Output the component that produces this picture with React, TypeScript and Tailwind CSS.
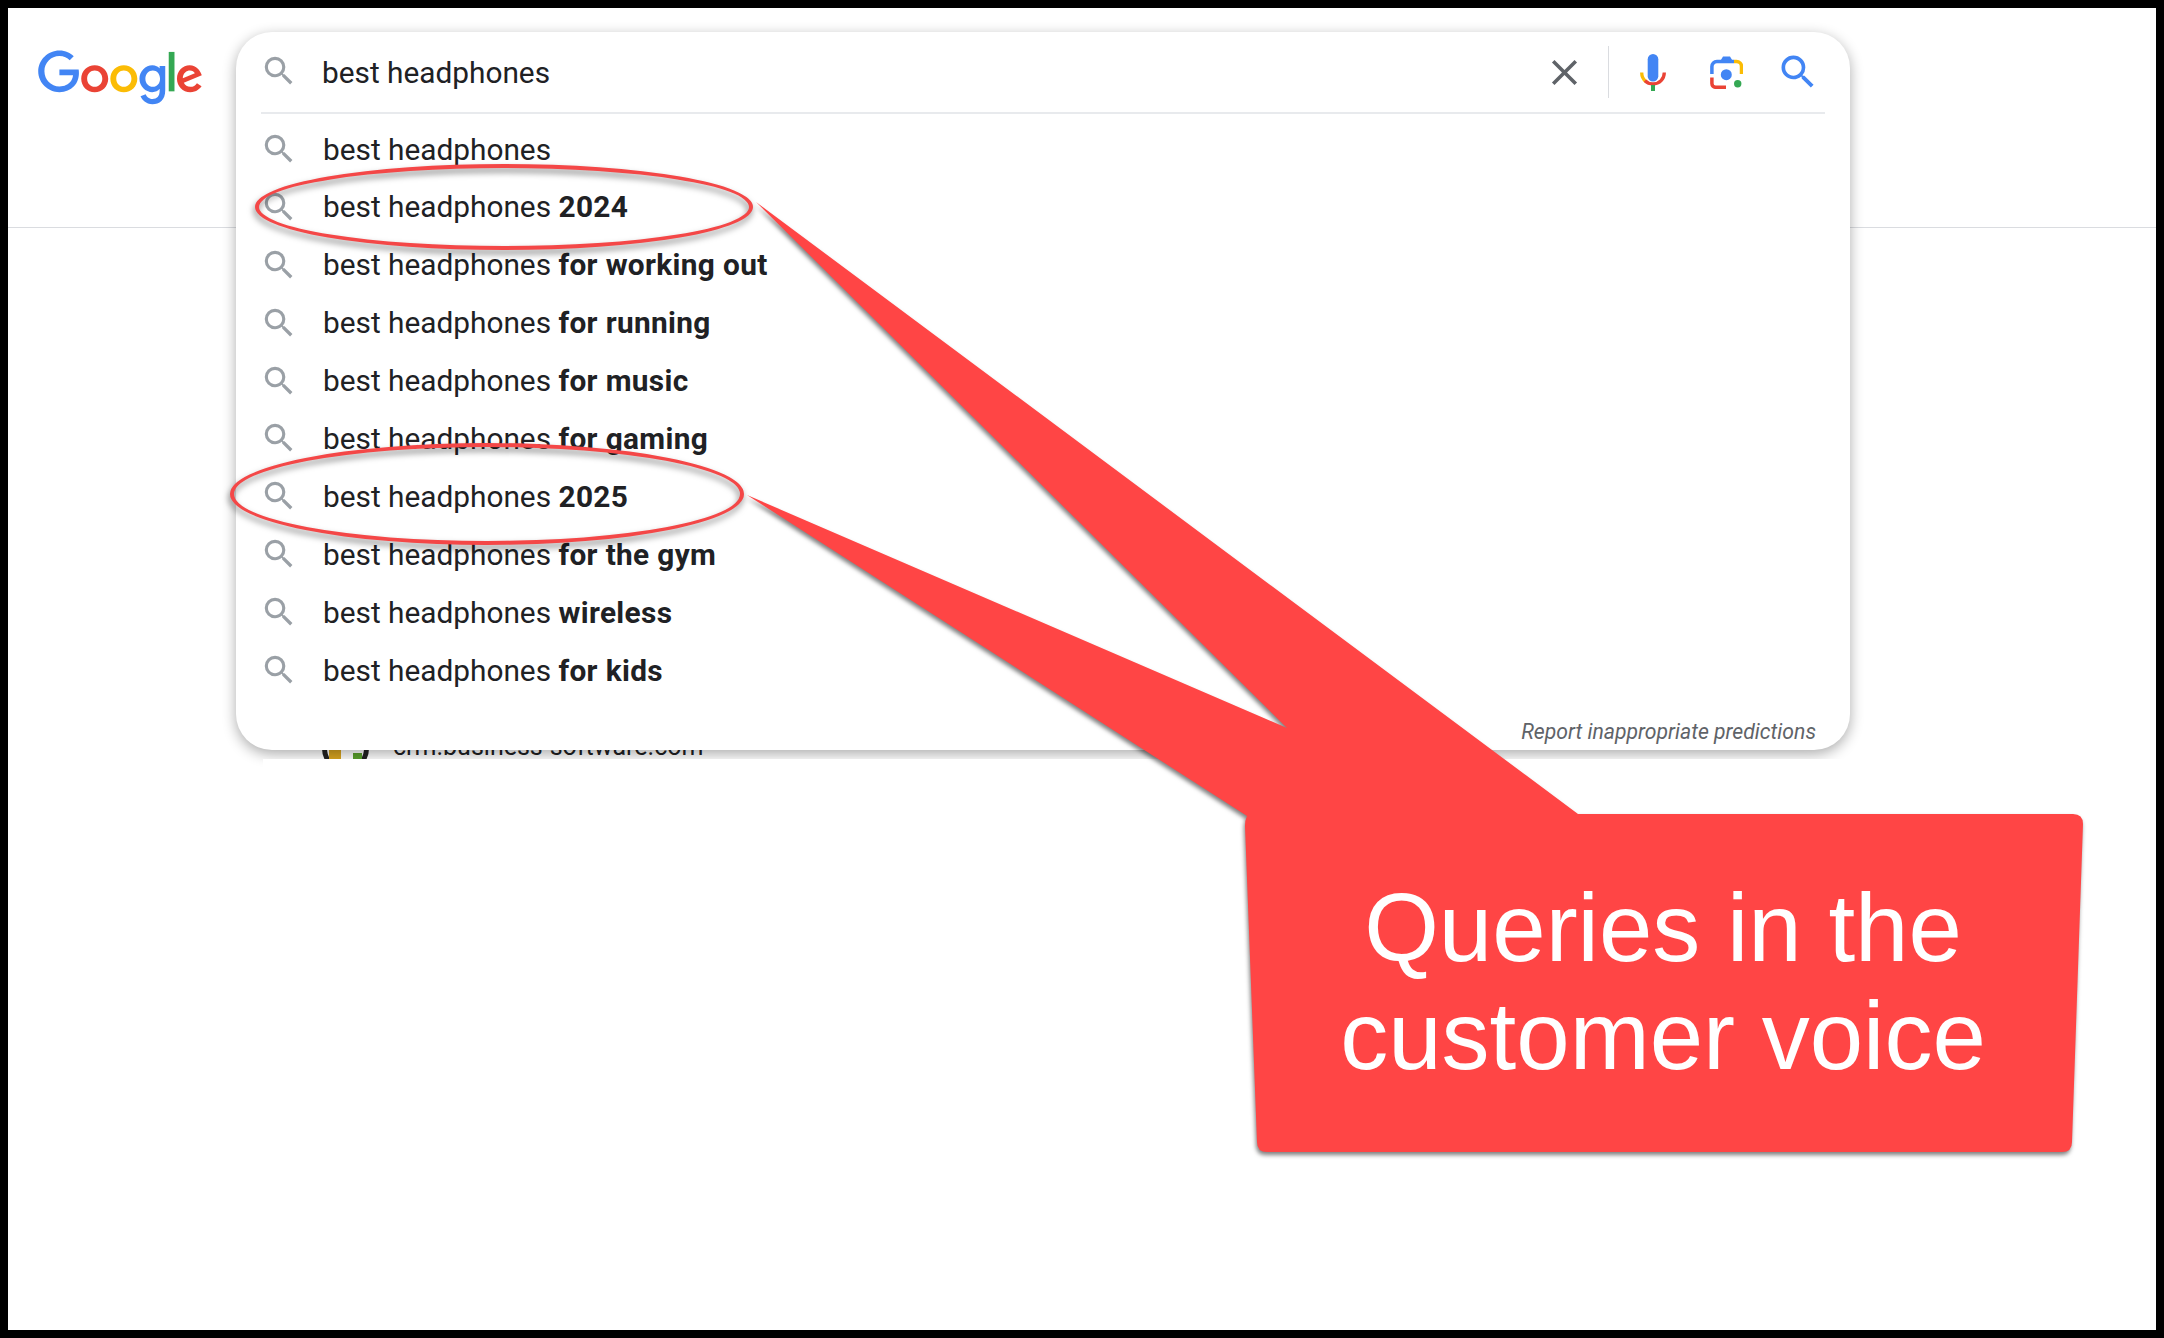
const rows: [string, string][] = [
  ["best headphones", ""],
  ["best headphones ", "2024"],
  ["best headphones ", "for working out"],
  ["best headphones ", "for running"],
  ["best headphones ", "for music"],
  ["best headphones ", "for gaming"],
  ["best headphones ", "2025"],
  ["best headphones ", "for the gym"],
  ["best headphones ", "wireless"],
  ["best headphones ", "for kids"],
];

function SearchIcon({ color = "#9aa0a6", className = "" }: { color?: string; className?: string }) {
  return (
    <svg viewBox="0 0 24 24" className={className} fill={color}>
      <path d="M15.5 14h-.79l-.28-.27A6.471 6.471 0 0 0 16 9.5 6.5 6.5 0 1 0 9.5 16c1.61 0 3.09-.59 4.23-1.57l.27.28v.79l5 4.99L20.49 19l-4.99-5zm-6 0C7.01 14 5 11.99 5 9.5S7.01 5 9.5 5 14 7.01 14 9.5 11.99 14 9.5 14z" />
    </svg>
  );
}

function GoogleLogo() {
  return (
    <svg viewBox="0 0 272 92" className="w-[165px] h-[56px] shrink-0">
      <path fill="#EA4335" d="M115.75 47.18c0 12.77-9.99 22.18-22.25 22.18s-22.25-9.41-22.25-22.18C71.25 34.32 81.24 25 93.5 25s22.25 9.32 22.25 22.18zm-9.74 0c0-7.98-5.79-13.44-12.51-13.44S80.99 39.2 80.99 47.18c0 7.9 5.79 13.44 12.51 13.44s12.51-5.55 12.51-13.44z" />
      <path fill="#FBBC05" d="M163.75 47.18c0 12.77-9.99 22.18-22.25 22.18s-22.25-9.41-22.25-22.18c0-12.85 9.99-22.18 22.25-22.18s22.25 9.32 22.25 22.18zm-9.74 0c0-7.98-5.79-13.44-12.51-13.44s-12.51 5.46-12.51 13.44c0 7.9 5.79 13.44 12.51 13.44s12.51-5.55 12.51-13.44z" />
      <path fill="#4285F4" d="M209.75 26.34v39.82c0 16.38-9.66 23.07-21.08 23.07-10.75 0-17.22-7.19-19.66-13.07l8.48-3.53c1.51 3.61 5.21 7.87 11.17 7.87 7.31 0 11.84-4.51 11.84-13v-3.19h-.34c-2.18 2.69-6.38 5.04-11.68 5.04-11.09 0-21.25-9.66-21.25-22.09 0-12.52 10.16-22.26 21.25-22.26 5.29 0 9.49 2.35 11.68 4.96h.34v-3.61h9.25zm-8.56 20.92c0-7.81-5.21-13.52-11.84-13.52-6.72 0-12.35 5.71-12.35 13.52 0 7.73 5.63 13.36 12.35 13.36 6.63 0 11.84-5.63 11.84-13.36z" />
      <path fill="#34A853" d="M225 3v65h-9.5V3h9.5z" />
      <path fill="#EA4335" d="M262.02 54.48l7.56 5.04c-2.44 3.61-8.32 9.83-18.48 9.83-12.6 0-22.01-9.74-22.01-22.18 0-13.19 9.49-22.18 20.92-22.18 11.51 0 17.14 9.16 18.98 14.11l1.01 2.52-29.65 12.28c2.27 4.45 5.8 6.72 10.75 6.72 4.96 0 8.4-2.44 10.92-6.14zm-23.27-7.98l19.82-8.23c-1.09-2.77-4.37-4.7-8.23-4.7-4.95 0-11.84 4.37-11.59 12.93z" />
      <path fill="#4285F4" d="M35.29 41.41V32H67c.31 1.64.47 3.58.47 5.68 0 7.06-1.93 15.79-8.15 22.01-6.05 6.3-13.78 9.66-24.02 9.66C16.32 69.35.36 53.89.36 34.91.36 15.93 16.32.47 35.3.47c10.5 0 17.98 4.12 23.6 9.49l-6.64 6.64c-4.03-3.78-9.49-6.72-16.97-6.72-13.86 0-24.7 11.17-24.7 25.03 0 13.86 10.84 25.03 24.7 25.03 8.99 0 14.11-3.61 17.39-6.89 2.66-2.66 4.41-6.46 5.1-11.65l-22.49.01z" />
    </svg>
  );
}

function MicIcon() {
  return (
    <svg viewBox="0 0 26 37" className="w-[26px] h-[37px] shrink-0" fill="none">
      <rect x="7.7" y="0" width="10.6" height="27.5" rx="5.3" fill="#4285f4" />
      <path d="M1.7 18.5c0 3.8 1.5 7 4.3 9.2" stroke="#fbbc05" strokeWidth="3.3" />
      <path d="M5 26.6c2 2.2 5 3.3 8 3.3 6.5 0 11.3-5 11.3-11.4" stroke="#ea4335" strokeWidth="3.3" />
      <rect x="11" y="31" width="4" height="6" fill="#34a853" />
    </svg>
  );
}

function LensIcon() {
  return (
    <svg viewBox="0 0 33 33" className="w-[33px] h-[33px] shrink-0" fill="none">
      <path d="M1.9 18v-7.5a5 5 0 0 1 5-5H24" stroke="#4285f4" strokeWidth="3.5" />
      <path d="M10 5.5 13 .5h7l3 5z" fill="#4285f4" />
      <path d="M24 5.5h2.5a5 5 0 0 1 5 5V18" stroke="#fbbc05" strokeWidth="3.5" />
      <path d="M1.9 21.5v6a3.8 3.8 0 0 0 3.8 3.8H16" stroke="#ea4335" strokeWidth="3.5" />
      <circle cx="16.3" cy="18.7" r="5.5" fill="#4285f4" />
      <circle cx="27.7" cy="27.7" r="3.7" fill="#34a853" />
    </svg>
  );
}

function SiteIcon() {
  return (
    <svg viewBox="0 0 47 34" className="w-[47px] h-[34px] shrink-0">
      <circle cx="23.5" cy="23.5" r="21" fill="#fff" stroke="#222" strokeWidth="5" />
      <rect x="7" y="25" width="12" height="9" fill="#d9a520" />
      <rect x="31" y="28" width="9" height="6" fill="#5aa02c" />
    </svg>
  );
}

function Callout() {
  return (
    <svg viewBox="8 8 2148 1322" className="absolute inset-0 w-full h-full pointer-events-none drop-shadow-[-1px_3px_2px_rgba(0,0,0,0.5)]">
      <path
        fill="#ff4545"
        d="M756 202 L1578 814 L2073 814 Q2083 814 2083 824 L2072 1142 Q2072 1152 2062 1152 L1267 1152 Q1257 1152 1257 1142 L1245 826 Q1245 820 1247 816 L747 495 L1287 728 Z"
      />
    </svg>
  );
}

export default function App() {
  return (
    <div className="relative w-[2164px] h-[1338px] bg-white border-8 border-black overflow-hidden font-['Roboto',sans-serif]">
      <div className="absolute left-0 right-0 top-[219px] h-px bg-[#dadce0]" />

      <div className="flex items-start pl-[30px] pt-[24px]">
        <div className="pt-[18px]">
          <GoogleLogo />
        </div>

        <div className="relative ml-[33px] w-[1614px]">
          {/* result peeking out from under the dropdown */}
          <div className="absolute left-[86px] top-[693px] flex items-start">
            <SiteIcon />
            <span className="ml-[24px] mt-[6.5px] text-[25px] leading-[30px] text-[#202124] whitespace-nowrap">crm.business-software.com</span>
          </div>

          <div className="relative h-[718px] bg-white rounded-[36px] shadow-[0_4px_14px_rgba(0,0,0,0.33)] flex flex-col">
            <div className="mx-[25px] h-[82px] border-b-2 border-[#e8eaed] flex items-center shrink-0">
              <SearchIcon className="w-[38px] h-[38px] -ml-[1px] -mt-[2px]" />
              <span className="ml-[24px] mt-[2px] flex-1 text-[29.8px] text-[#202124]">best headphones</span>
              <svg viewBox="0 0 24 24" className="w-[43px] h-[43px]" fill="#5f6368">
                <path d="M19 6.41 17.59 5 12 10.59 6.41 5 5 6.41 10.59 12 5 17.59 6.41 19 12 13.41 17.59 19 19 17.59 13.41 12z" />
              </svg>
              <div className="ml-[22.5px] w-px h-[52px] bg-[#dadce0]" />
              <div className="ml-[31px] flex"><MicIcon /></div>
              <div className="ml-[44px] flex"><LensIcon /></div>
              <SearchIcon color="#4285f4" className="ml-[33px] w-[44px] h-[44px] mr-[5px]" />
            </div>
            <div className="flex flex-col pt-[7px]">
              {rows.map(([plain, bold], i) => (
                <div key={i} className="h-[57.9px] flex items-center pl-[24px]">
                  <SearchIcon className="w-[38px] h-[38px] -mt-[2px]" />
                  <span className="ml-[25px] text-[29.8px] text-[#202124] whitespace-pre">
                    {plain}<b className="font-bold tracking-[0.35px]">{bold}</b>
                  </span>
                </div>
              ))}
            </div>
            <div className="mt-auto pb-[2px] pr-[34px] text-right text-[21.2px] italic text-[#5f6368]">Report inappropriate predictions</div>
          </div>

          {/* white block that cuts the dropdown shadow off */}
          <div className="absolute left-[27px] top-[727px] w-[1597px] h-[40px] bg-white" />
        </div>
      </div>

      <Callout />

      {/* circles round the two year queries */}
      <div className="absolute left-[247px] top-[156px] w-[498px] h-[86px] rounded-[50%] border-4 border-[#f44747] drop-shadow-[-1px_4px_3px_rgba(0,0,0,0.5)]" />
      <div className="absolute left-[222px] top-[435px] w-[514px] h-[102px] rounded-[50%] border-4 border-[#f44747] drop-shadow-[-1px_4px_3px_rgba(0,0,0,0.5)]" />

      <div className="absolute left-[1255px] top-[866px] w-[800px] text-center text-white font-['Liberation_Sans',sans-serif] text-[96px] leading-[108px]">
        Queries in the<br />customer voice
      </div>
    </div>
  );
}
